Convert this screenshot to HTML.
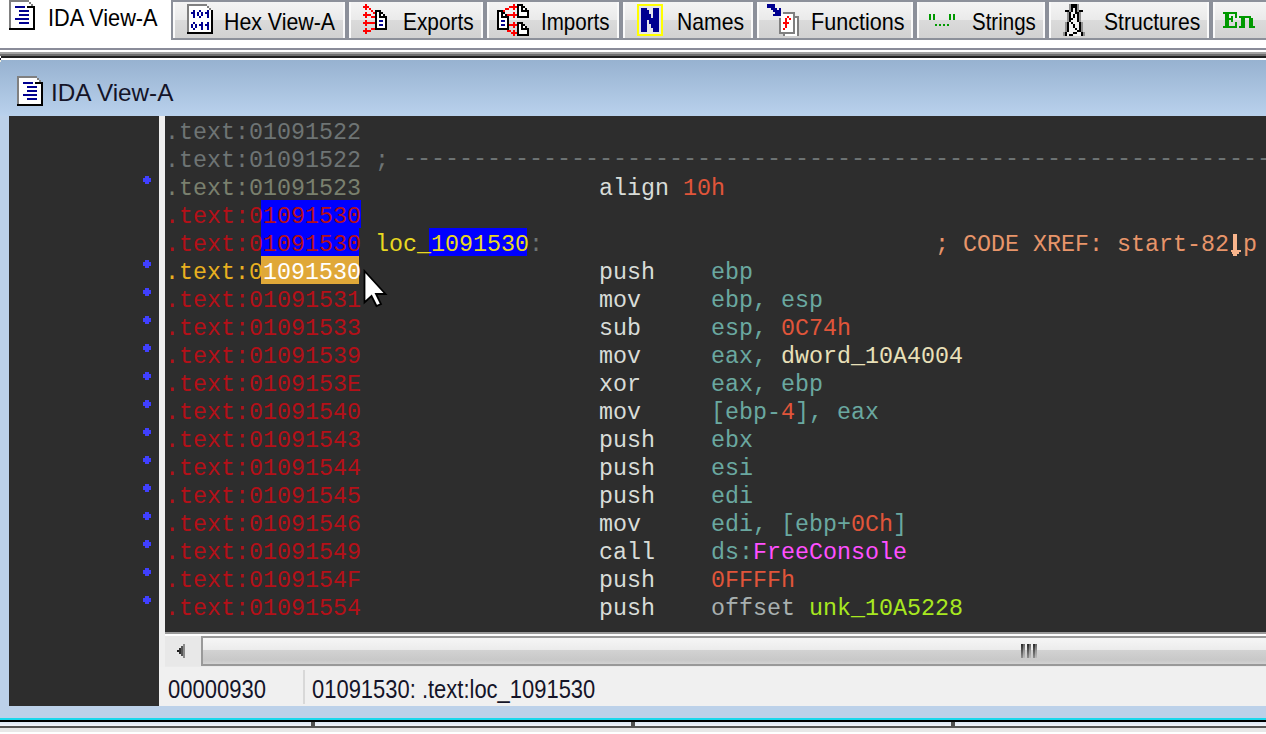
<!DOCTYPE html>
<html><head><meta charset="utf-8">
<style>
*{margin:0;padding:0;box-sizing:border-box}
html,body{width:1266px;height:734px;overflow:hidden;background:#fff;position:relative}
.a{position:absolute;display:block}
.tab{position:absolute;top:0;height:40px;border:2px solid #8c909a;
 background:linear-gradient(#f4f4f4 0%,#eaeaea 50%,#dbdbdb 50%,#d2d2d2 100%);
 box-shadow:inset 2px 0 0 #fafafa,inset -2px 0 0 #fafafa}
.tt{position:absolute;font-family:"Liberation Sans",sans-serif;white-space:nowrap;line-height:1;transform-origin:0 0}
.code{position:absolute;left:165px;top:119px;font-family:"Liberation Mono",monospace;font-size:23.33px;line-height:28px;color:#c8c8c8}
.ln{height:28px;white-space:pre}
.g{color:#6e7474}
.gy{color:#7a806e}
.r{color:#b41018}
.y{color:#e8b020}
.mn{color:#d8dcd8}
.rg{color:#6aa8a0}
.nm{color:#e0553a}
.ho{color:#fff}
.yl{color:#e8d820}
.cm{color:#e8956a}
.dw{color:#e8e0b8}
.fn{color:#ff50ff}
.un{color:#a8e820}
.dot{position:absolute;left:143px;width:8px;height:8px;background:#4040ff;
 clip-path:polygon(25% 0,75% 0,75% 25%,100% 25%,100% 75%,75% 75%,75% 100%,25% 100%,25% 75%,0 75%,0 25%,25% 25%)}
</style></head><body>

<div class="tab" style="left:171px;width:176px"></div>
<div class="tab" style="left:347px;width:138px"></div>
<div class="tab" style="left:485px;width:136px"></div>
<div class="tab" style="left:621px;width:134px"></div>
<div class="tab" style="left:755px;width:160px"></div>
<div class="tab" style="left:915px;width:132px"></div>
<div class="tab" style="left:1047px;width:164px"></div>
<div class="tab" style="left:1211px;width:80px"></div>
<svg class="a" style="left:9px;top:0px" width="26" height="30" viewBox="0 0 13 15" shape-rendering="crispEdges"><rect x="1" y="1" width="9" height="13" fill="#fff"/><rect x="10" y="2" width="1" height="12" fill="#fff"/><rect x="11" y="3" width="1" height="11" fill="#fff"/><rect x="0" y="0" width="10" height="1" fill="#808080"/><rect x="0" y="0" width="1" height="14" fill="#808080"/><rect x="10" y="1" width="1" height="1" fill="#808080"/><rect x="11" y="2" width="1" height="1" fill="#808080"/><rect x="9" y="3" width="4" height="1" fill="#000"/><rect x="12" y="3" width="1" height="12" fill="#000"/><rect x="0" y="14" width="13" height="1" fill="#000"/><rect x="3" y="3" width="5" height="1" fill="#000090"/><rect x="5" y="5" width="5" height="1" fill="#000090"/><rect x="5" y="7" width="5" height="1" fill="#000090"/><rect x="3" y="9" width="7" height="1" fill="#000090"/><rect x="5" y="11" width="5" height="1" fill="#000090"/></svg>
<svg class="a" style="left:187px;top:4px" width="26" height="30" viewBox="0 0 13 15" shape-rendering="crispEdges"><rect x="1" y="1" width="9" height="13" fill="#fff"/><rect x="10" y="2" width="1" height="12" fill="#fff"/><rect x="11" y="3" width="1" height="11" fill="#fff"/><rect x="0" y="0" width="10" height="1" fill="#808080"/><rect x="0" y="0" width="1" height="14" fill="#808080"/><rect x="10" y="1" width="1" height="1" fill="#808080"/><rect x="11" y="2" width="1" height="1" fill="#808080"/><rect x="12" y="3" width="1" height="12" fill="#000"/><rect x="0" y="14" width="13" height="1" fill="#000"/><rect x="2" y="4" width="1" height="1" fill="#000090"/><rect x="3" y="3" width="1" height="4" fill="#000090"/><rect x="6" y="3" width="1" height="1" fill="#000090"/><rect x="5" y="4" width="1" height="2" fill="#000090"/><rect x="7" y="4" width="1" height="2" fill="#000090"/><rect x="6" y="6" width="1" height="1" fill="#000090"/><rect x="9" y="4" width="1" height="1" fill="#000090"/><rect x="10" y="3" width="1" height="4" fill="#000090"/><rect x="3" y="9" width="1" height="1" fill="#000090"/><rect x="2" y="10" width="1" height="2" fill="#000090"/><rect x="4" y="10" width="1" height="2" fill="#000090"/><rect x="3" y="12" width="1" height="1" fill="#000090"/><rect x="6" y="10" width="1" height="1" fill="#000090"/><rect x="7" y="9" width="1" height="4" fill="#000090"/><rect x="9" y="10" width="1" height="1" fill="#000090"/><rect x="10" y="9" width="1" height="4" fill="#000090"/></svg>
<svg class="a" style="left:363px;top:4px" width="26" height="32" viewBox="0 0 13 16" shape-rendering="crispEdges"><rect x="7" y="4" width="1" height="8" fill="#fff"/><rect x="8" y="4" width="1" height="2" fill="#fff"/><rect x="9" y="5" width="1" height="1" fill="#fff"/><rect x="8" y="6" width="3" height="6" fill="#fff"/><rect x="0" y="1" width="3" height="1" fill="#ff0000"/><rect x="1" y="0" width="1" height="3" fill="#ff0000"/><rect x="0" y="5" width="3" height="1" fill="#ff0000"/><rect x="1" y="4" width="1" height="3" fill="#ff0000"/><rect x="0" y="9" width="3" height="1" fill="#ff0000"/><rect x="1" y="8" width="1" height="3" fill="#ff0000"/><rect x="0" y="13" width="3" height="1" fill="#ff0000"/><rect x="1" y="12" width="1" height="3" fill="#ff0000"/><rect x="3" y="2" width="1" height="1" fill="#ff0000"/><rect x="4" y="3" width="1" height="1" fill="#ff0000"/><rect x="5" y="4" width="1" height="1" fill="#ff0000"/><rect x="3" y="5" width="1" height="1" fill="#ff0000"/><rect x="4" y="6" width="2" height="1" fill="#ff0000"/><rect x="3" y="9" width="3" height="1" fill="#ff0000"/><rect x="3" y="13" width="1" height="1" fill="#ff0000"/><rect x="4" y="12" width="2" height="1" fill="#ff0000"/><rect x="6" y="3" width="3" height="1" fill="#000"/><rect x="6" y="3" width="1" height="10" fill="#000"/><rect x="6" y="12" width="6" height="1" fill="#000"/><rect x="11" y="6" width="1" height="7" fill="#000"/><rect x="8" y="4" width="1" height="2" fill="#000"/><rect x="9" y="4" width="1" height="1" fill="#000"/><rect x="10" y="5" width="1" height="1" fill="#000"/><rect x="8" y="6" width="4" height="1" fill="#000"/><rect x="8" y="8" width="2" height="1" fill="#000090"/><rect x="8" y="10" width="2" height="1" fill="#000090"/></svg>
<svg class="a" style="left:497px;top:4px" width="32" height="32" viewBox="0 0 16 16" shape-rendering="crispEdges"><rect x="1" y="4" width="1" height="8" fill="#fff"/><rect x="3" y="5" width="1" height="1" fill="#fff"/><rect x="2" y="7" width="3" height="5" fill="#fff"/><rect x="0" y="3" width="1" height="10" fill="#000"/><rect x="0" y="3" width="3" height="1" fill="#000"/><rect x="0" y="12" width="6" height="1" fill="#000"/><rect x="5" y="6" width="1" height="7" fill="#000"/><rect x="3" y="4" width="1" height="1" fill="#000"/><rect x="4" y="5" width="1" height="1" fill="#000"/><rect x="2" y="4" width="1" height="2" fill="#000"/><rect x="2" y="6" width="4" height="1" fill="#000"/><rect x="2" y="8" width="2" height="1" fill="#000090"/><rect x="2" y="10" width="2" height="1" fill="#000090"/><rect x="11" y="1" width="1" height="5" fill="#fff"/><rect x="13" y="2" width="1" height="1" fill="#fff"/><rect x="12" y="4" width="3" height="2" fill="#fff"/><rect x="10" y="0" width="1" height="7" fill="#000"/><rect x="10" y="0" width="3" height="1" fill="#000"/><rect x="10" y="6" width="6" height="1" fill="#000"/><rect x="15" y="3" width="1" height="4" fill="#000"/><rect x="12" y="1" width="1" height="2" fill="#000"/><rect x="13" y="1" width="1" height="1" fill="#000"/><rect x="14" y="2" width="1" height="1" fill="#000"/><rect x="12" y="3" width="4" height="1" fill="#000"/><rect x="11" y="10" width="1" height="5" fill="#fff"/><rect x="13" y="11" width="1" height="1" fill="#fff"/><rect x="12" y="13" width="3" height="2" fill="#fff"/><rect x="10" y="9" width="1" height="7" fill="#000"/><rect x="10" y="9" width="3" height="1" fill="#000"/><rect x="10" y="15" width="6" height="1" fill="#000"/><rect x="15" y="12" width="1" height="4" fill="#000"/><rect x="12" y="10" width="1" height="2" fill="#000"/><rect x="13" y="10" width="1" height="1" fill="#000"/><rect x="14" y="11" width="1" height="1" fill="#000"/><rect x="12" y="12" width="4" height="1" fill="#000"/><rect x="7" y="1" width="3" height="1" fill="#ff0000"/><rect x="8" y="0" width="1" height="3" fill="#ff0000"/><rect x="7" y="5" width="3" height="1" fill="#ff0000"/><rect x="8" y="4" width="1" height="3" fill="#ff0000"/><rect x="7" y="10" width="3" height="1" fill="#ff0000"/><rect x="8" y="9" width="1" height="3" fill="#ff0000"/><rect x="7" y="14" width="3" height="1" fill="#ff0000"/><rect x="8" y="13" width="1" height="3" fill="#ff0000"/><rect x="6" y="1" width="1" height="1" fill="#ff0000"/><rect x="4" y="2" width="2" height="1" fill="#ff0000"/><rect x="3" y="3" width="1" height="1" fill="#ff0000"/><rect x="5" y="5" width="2" height="1" fill="#ff0000"/><rect x="6" y="10" width="1" height="1" fill="#ff0000"/><rect x="5" y="13" width="2" height="1" fill="#ff0000"/></svg>
<svg class="a" style="left:637px;top:4px" width="26" height="32" viewBox="0 0 13 16" shape-rendering="crispEdges"><rect x="0" y="0" width="13" height="16" fill="#ffff00"/><rect x="1" y="1" width="11" height="14" fill="#e4e4ec"/><rect x="2" y="2" width="3" height="12" fill="#000090"/><rect x="8" y="2" width="3" height="12" fill="#000090"/><rect x="5" y="3" width="1" height="5" fill="#000090"/><rect x="6" y="5" width="1" height="5" fill="#000090"/><rect x="7" y="7" width="1" height="5" fill="#000090"/></svg>
<svg class="a" style="left:767px;top:4px" width="32" height="32" viewBox="0 0 16 16" shape-rendering="crispEdges"><rect x="14" y="7" width="1" height="9" fill="#fff"/><rect x="9" y="15" width="6" height="1" fill="#fff"/><rect x="14" y="6" width="2" height="1" fill="#808080"/><rect x="15" y="6" width="1" height="10" fill="#808080"/><rect x="8" y="15" width="1" height="1" fill="#808080"/><rect x="7" y="5" width="6" height="9" fill="#fff"/><rect x="8" y="4" width="6" height="1" fill="#808080"/><rect x="13" y="4" width="1" height="11" fill="#808080"/><rect x="6" y="7" width="1" height="8" fill="#808080"/><rect x="6" y="14" width="8" height="1" fill="#808080"/><rect x="10" y="6" width="1" height="1" fill="#ff0000"/><rect x="11" y="7" width="1" height="1" fill="#ff0000"/><rect x="9" y="7" width="1" height="5" fill="#ff0000"/><rect x="8" y="9" width="3" height="1" fill="#ff0000"/><rect x="8" y="12" width="1" height="1" fill="#ff0000"/><rect x="0" y="0" width="4" height="2" fill="#000090"/><rect x="2" y="2" width="3" height="1" fill="#000090"/><rect x="6" y="2" width="1" height="4" fill="#000090"/><rect x="3" y="3" width="4" height="1" fill="#000090"/><rect x="4" y="4" width="3" height="1" fill="#000090"/><rect x="3" y="5" width="4" height="1" fill="#000090"/></svg>
<svg class="a" style="left:929px;top:14px" width="26" height="12" viewBox="0 0 13 6" shape-rendering="crispEdges"><rect x="0" y="0" width="1" height="3" fill="#009900"/><rect x="2" y="0" width="1" height="3" fill="#009900"/><rect x="10" y="0" width="1" height="3" fill="#009900"/><rect x="12" y="0" width="1" height="3" fill="#009900"/><rect x="3" y="5" width="1" height="1" fill="#009900"/><rect x="5" y="5" width="1" height="1" fill="#009900"/><rect x="7" y="5" width="1" height="1" fill="#009900"/><rect x="9" y="5" width="1" height="1" fill="#009900"/></svg>
<svg class="a" style="left:1063px;top:4px" width="22" height="32" viewBox="0 0 11 16" shape-rendering="crispEdges"><rect x="5" y="2" width="1" height="2" fill="#f2f2f2"/><rect x="4" y="4" width="3" height="5" fill="#f2f2f2"/><rect x="3" y="9" width="5" height="5" fill="#f2f2f2"/><rect x="2" y="14" width="7" height="2" fill="#f2f2f2"/><rect x="3" y="0" width="1" height="4" fill="#909090"/><rect x="7" y="0" width="1" height="4" fill="#909090"/><rect x="2" y="4" width="1" height="5" fill="#909090"/><rect x="8" y="4" width="1" height="5" fill="#909090"/><rect x="1" y="9" width="1" height="5" fill="#909090"/><rect x="9" y="9" width="1" height="5" fill="#909090"/><rect x="0" y="14" width="1" height="2" fill="#909090"/><rect x="10" y="14" width="1" height="2" fill="#909090"/><rect x="4" y="0" width="3" height="2" fill="#000"/><rect x="4" y="2" width="1" height="2" fill="#000"/><rect x="6" y="2" width="1" height="3" fill="#000"/><rect x="1" y="3" width="2" height="1" fill="#000"/><rect x="8" y="3" width="2" height="1" fill="#000"/><rect x="3" y="4" width="1" height="5" fill="#000"/><rect x="7" y="4" width="1" height="5" fill="#000"/><rect x="5" y="5" width="1" height="2" fill="#000"/><rect x="4" y="7" width="1" height="1" fill="#000"/><rect x="4" y="9" width="1" height="1" fill="#000"/><rect x="5" y="10" width="1" height="2" fill="#000"/><rect x="6" y="12" width="1" height="1" fill="#000"/><rect x="7" y="13" width="1" height="1" fill="#000"/><rect x="2" y="9" width="1" height="5" fill="#000"/><rect x="8" y="9" width="1" height="5" fill="#000"/><rect x="1" y="14" width="1" height="2" fill="#000"/><rect x="9" y="14" width="1" height="2" fill="#000"/><rect x="5" y="14" width="2" height="1" fill="#000"/><rect x="3" y="15" width="2" height="1" fill="#000"/></svg>
<svg class="a" style="left:1223px;top:12px" width="32" height="16" viewBox="0 0 16 8" shape-rendering="crispEdges"><rect x="0" y="0" width="7" height="1" fill="#009900"/><rect x="1" y="1" width="2" height="6" fill="#009900"/><rect x="6" y="1" width="1" height="2" fill="#009900"/><rect x="1" y="3" width="4" height="1" fill="#009900"/><rect x="4" y="2" width="1" height="3" fill="#009900"/><rect x="6" y="5" width="1" height="2" fill="#009900"/><rect x="0" y="7" width="7" height="1" fill="#009900"/><rect x="8" y="2" width="6" height="1" fill="#009900"/><rect x="9" y="3" width="2" height="4" fill="#009900"/><rect x="13" y="3" width="2" height="4" fill="#009900"/><rect x="8" y="7" width="3" height="1" fill="#009900"/><rect x="13" y="7" width="3" height="1" fill="#009900"/></svg>
<div class="tt" style="left:48px;top:6px;font-size:24px;color:#000;transform:scaleX(0.9062);">IDA View-A</div>
<div class="tt" style="left:224px;top:10px;font-size:24px;color:#000;transform:scaleX(0.889);">Hex View-A</div>
<div class="tt" style="left:403px;top:10px;font-size:24px;color:#000;transform:scaleX(0.8695);">Exports</div>
<div class="tt" style="left:541px;top:10px;font-size:24px;color:#000;transform:scaleX(0.8556);">Imports</div>
<div class="tt" style="left:677px;top:10px;font-size:24px;color:#000;transform:scaleX(0.8819);">Names</div>
<div class="tt" style="left:811px;top:10px;font-size:24px;color:#000;transform:scaleX(0.8987);">Functions</div>
<div class="tt" style="left:972px;top:10px;font-size:24px;color:#000;transform:scaleX(0.8538);">Strings</div>
<div class="tt" style="left:1104px;top:10px;font-size:24px;color:#000;transform:scaleX(0.8794);">Structures</div>

<div class="a" style="left:0;top:48px;width:1266px;height:2px;background:#8a8c99"></div>
<div class="a" style="left:0;top:52px;width:1266px;height:2px;background:#a2a2a2"></div>
<div class="a" style="left:0;top:54px;width:1266px;height:2px;background:#6e6e6e"></div>
<div class="a" style="left:0;top:56px;width:1266px;height:2px;background:#222"></div>
<div class="a" style="left:0;top:60px;width:1266px;height:658px;background:#bcd1e9"></div>
<div class="a" style="left:0;top:60px;width:1266px;height:56px;background:linear-gradient(#97b2d0,#b9d1ec)"></div>

<div class="a" style="left:0;top:56px;width:1px;height:2px;background:#fff"></div><div class="a" style="left:0;top:58px;width:1px;height:2px;background:#202030"></div><div class="a" style="left:0;top:60px;width:1px;height:2px;background:#f0f0e0"></div>
<svg class="a" style="left:17px;top:76px" width="26" height="30" viewBox="0 0 13 15" shape-rendering="crispEdges"><rect x="1" y="1" width="9" height="13" fill="#fff"/><rect x="10" y="2" width="1" height="12" fill="#fff"/><rect x="11" y="3" width="1" height="11" fill="#fff"/><rect x="0" y="0" width="10" height="1" fill="#808080"/><rect x="0" y="0" width="1" height="14" fill="#808080"/><rect x="10" y="1" width="1" height="1" fill="#808080"/><rect x="11" y="2" width="1" height="1" fill="#808080"/><rect x="9" y="3" width="4" height="1" fill="#000"/><rect x="12" y="3" width="1" height="12" fill="#000"/><rect x="0" y="14" width="13" height="1" fill="#000"/><rect x="3" y="3" width="5" height="1" fill="#000090"/><rect x="5" y="5" width="5" height="1" fill="#000090"/><rect x="5" y="7" width="5" height="1" fill="#000090"/><rect x="3" y="9" width="7" height="1" fill="#000090"/><rect x="5" y="11" width="5" height="1" fill="#000090"/></svg>
<div class="tt" style="left:51px;top:81px;font-size:24px;color:#141428;transform:scaleX(1.0118);">IDA View-A</div>

<div class="a" style="left:9px;top:116px;width:150px;height:590px;background:#2d2d2d"></div>
<div class="a" style="left:159px;top:116px;width:6px;height:590px;background:#efefef"></div>
<div class="a" style="left:165px;top:116px;width:1101px;height:516px;background:#2d2d2d"></div>
<div class="a" style="left:261px;top:200px;width:100px;height:28px;background:#0000ff"></div>
<div class="a" style="left:261px;top:228px;width:98px;height:28px;background:#0000ff"></div>
<div class="a" style="left:429px;top:228px;width:98px;height:28px;background:#0000ff"></div>
<div class="a" style="left:261px;top:256px;width:98px;height:28px;background:#e0a838"></div>

<div class="code"><div class="ln g">.text:01091522</div><div class="ln g">.text:01091522 ; <span style="position:relative;top:-2px">----------------------------------------------------------------------</span></div><div class="ln gy">.text:01091523                 <span class="mn">align</span> <span class="nm">10h</span></div><div class="ln r">.text:01091530</div><div class="ln r">.text:01091530 <span class="yl">loc_1091530</span><span class="g">:</span>                            <span class="cm">; CODE XREF: start-82 p</span></div><div class="ln y">.text:0<span class="ho">1091530</span>                 <span class="mn">push</span>    <span class="rg">ebp</span></div><div class="ln r">.text:01091531                 <span class="mn">mov</span>     <span class="rg">ebp, esp</span></div><div class="ln r">.text:01091533                 <span class="mn">sub</span>     <span class="rg">esp, </span><span class="nm">0C74h</span></div><div class="ln r">.text:01091539                 <span class="mn">mov</span>     <span class="rg">eax, </span><span class="dw">dword_10A4004</span></div><div class="ln r">.text:0109153E                 <span class="mn">xor</span>     <span class="rg">eax, ebp</span></div><div class="ln r">.text:01091540                 <span class="mn">mov</span>     <span class="rg">[ebp-</span><span class="nm">4</span><span class="rg">], eax</span></div><div class="ln r">.text:01091543                 <span class="mn">push</span>    <span class="rg">ebx</span></div><div class="ln r">.text:01091544                 <span class="mn">push</span>    <span class="rg">esi</span></div><div class="ln r">.text:01091545                 <span class="mn">push</span>    <span class="rg">edi</span></div><div class="ln r">.text:01091546                 <span class="mn">mov</span>     <span class="rg">edi, [ebp+</span><span class="nm">0Ch</span><span class="rg">]</span></div><div class="ln r">.text:01091549                 <span class="mn">call</span>    <span class="rg">ds:</span><span class="fn">FreeConsole</span></div><div class="ln r">.text:0109154F                 <span class="mn">push</span>    <span class="nm">0FFFFh</span></div><div class="ln r">.text:01091554                 <span class="mn">push</span>    <span style="color:#a8b0b0">offset</span> <span class="un">unk_10A5228</span></div></div>
<div class="dot" style="top:176px"></div>
<div class="dot" style="top:260px"></div>
<div class="dot" style="top:288px"></div>
<div class="dot" style="top:316px"></div>
<div class="dot" style="top:344px"></div>
<div class="dot" style="top:372px"></div>
<div class="dot" style="top:400px"></div>
<div class="dot" style="top:428px"></div>
<div class="dot" style="top:456px"></div>
<div class="dot" style="top:484px"></div>
<div class="dot" style="top:512px"></div>
<div class="dot" style="top:540px"></div>
<div class="dot" style="top:568px"></div>
<div class="dot" style="top:596px"></div>
<div class="a" style="left:1233px;top:234px;width:4px;height:16px;background:#f8b48c"></div><div class="a" style="left:1231px;top:250px;width:10px;height:2px;background:#f8b48c"></div><div class="a" style="left:1232px;top:252px;width:7px;height:2px;background:#f8b48c"></div><div class="a" style="left:1233px;top:254px;width:4px;height:2px;background:#f8b48c"></div>
<svg class="a" style="left:360px;top:266px" width="32" height="46" viewBox="0 0 32 46"><path d="M4.5 5 L4.5 36.5 L11.5 30 L16.5 40 L21 38 L16 28 L25.5 28 Z" fill="#fff" stroke="#000" stroke-width="1.8" stroke-linejoin="miter"/></svg>

<div class="a" style="left:165px;top:632px;width:1101px;height:2px;background:#999"></div>
<div class="a" style="left:165px;top:634px;width:1101px;height:2px;background:#fff"></div>
<div class="a" style="left:165px;top:636px;width:1101px;height:31px;background:#e8e8e8"></div>
<svg class="a" style="left:177px;top:644px" width="8" height="14" viewBox="0 0 4 7" shape-rendering="crispEdges"><rect x="0" y="3" width="1" height="1" fill="#202020"/><rect x="1" y="2" width="1" height="3" fill="#303030"/><rect x="2" y="1" width="1" height="5" fill="#555"/><rect x="3" y="0" width="1" height="7" fill="#8a8a8a"/></svg>
<div class="a" style="left:201px;top:636px;width:1100px;height:30px;border:2px solid #999;background:linear-gradient(#f6f6f6,#ececec 45%,#d2d2d2 47%,#c8c8c8 85%,#d2d2d2)"></div>
<div class="a" style="left:1021px;top:644px;width:2px;height:14px;background:linear-gradient(#2a2a2a,#5a5a5a 50%,#909090)"></div><div class="a" style="left:1023px;top:644px;width:2px;height:14px;background:linear-gradient(#666,#999 50%,#bbb)"></div>
<div class="a" style="left:1027px;top:644px;width:2px;height:14px;background:linear-gradient(#2a2a2a,#5a5a5a 50%,#909090)"></div><div class="a" style="left:1029px;top:644px;width:2px;height:14px;background:linear-gradient(#666,#999 50%,#bbb)"></div>
<div class="a" style="left:1033px;top:644px;width:2px;height:14px;background:linear-gradient(#2a2a2a,#5a5a5a 50%,#909090)"></div><div class="a" style="left:1035px;top:644px;width:2px;height:14px;background:linear-gradient(#666,#999 50%,#bbb)"></div>
<div class="a" style="left:165px;top:666px;width:1101px;height:2px;background:#eaeaea"></div>
<div class="a" style="left:159px;top:667px;width:1107px;height:39px;background:#f0f0f0"></div>
<div class="a" style="left:303px;top:670px;width:2px;height:34px;background:#d8d8d8"></div>

<div class="tt" style="left:168px;top:677px;font-size:25px;color:#141428;transform:scaleX(0.8809);">00000930</div>
<div class="tt" style="left:312px;top:677px;font-size:25px;color:#141428;transform:scaleX(0.8784);">01091530: .text:loc_1091530</div>

<div class="a" style="left:0;top:718px;width:1266px;height:2px;background:#1ad8ec"></div>
<div class="a" style="left:0;top:720px;width:1266px;height:2px;background:#000"></div>
<div class="a" style="left:0;top:722px;width:1266px;height:4px;background:linear-gradient(#dce8f6,#f4f6fa)"></div>
<div class="a" style="left:0;top:726px;width:1266px;height:2px;background:#555"></div>
<div class="a" style="left:0;top:728px;width:1266px;height:4px;background:#e8e8e8"></div>
<div class="a" style="left:0;top:732px;width:1266px;height:2px;background:#fff"></div>
<div class="a" style="left:311px;top:722px;width:4px;height:5px;background:#505050"></div>
<div class="a" style="left:631px;top:722px;width:4px;height:5px;background:#505050"></div>
<div class="a" style="left:951px;top:722px;width:4px;height:5px;background:#505050"></div>
</body></html>
